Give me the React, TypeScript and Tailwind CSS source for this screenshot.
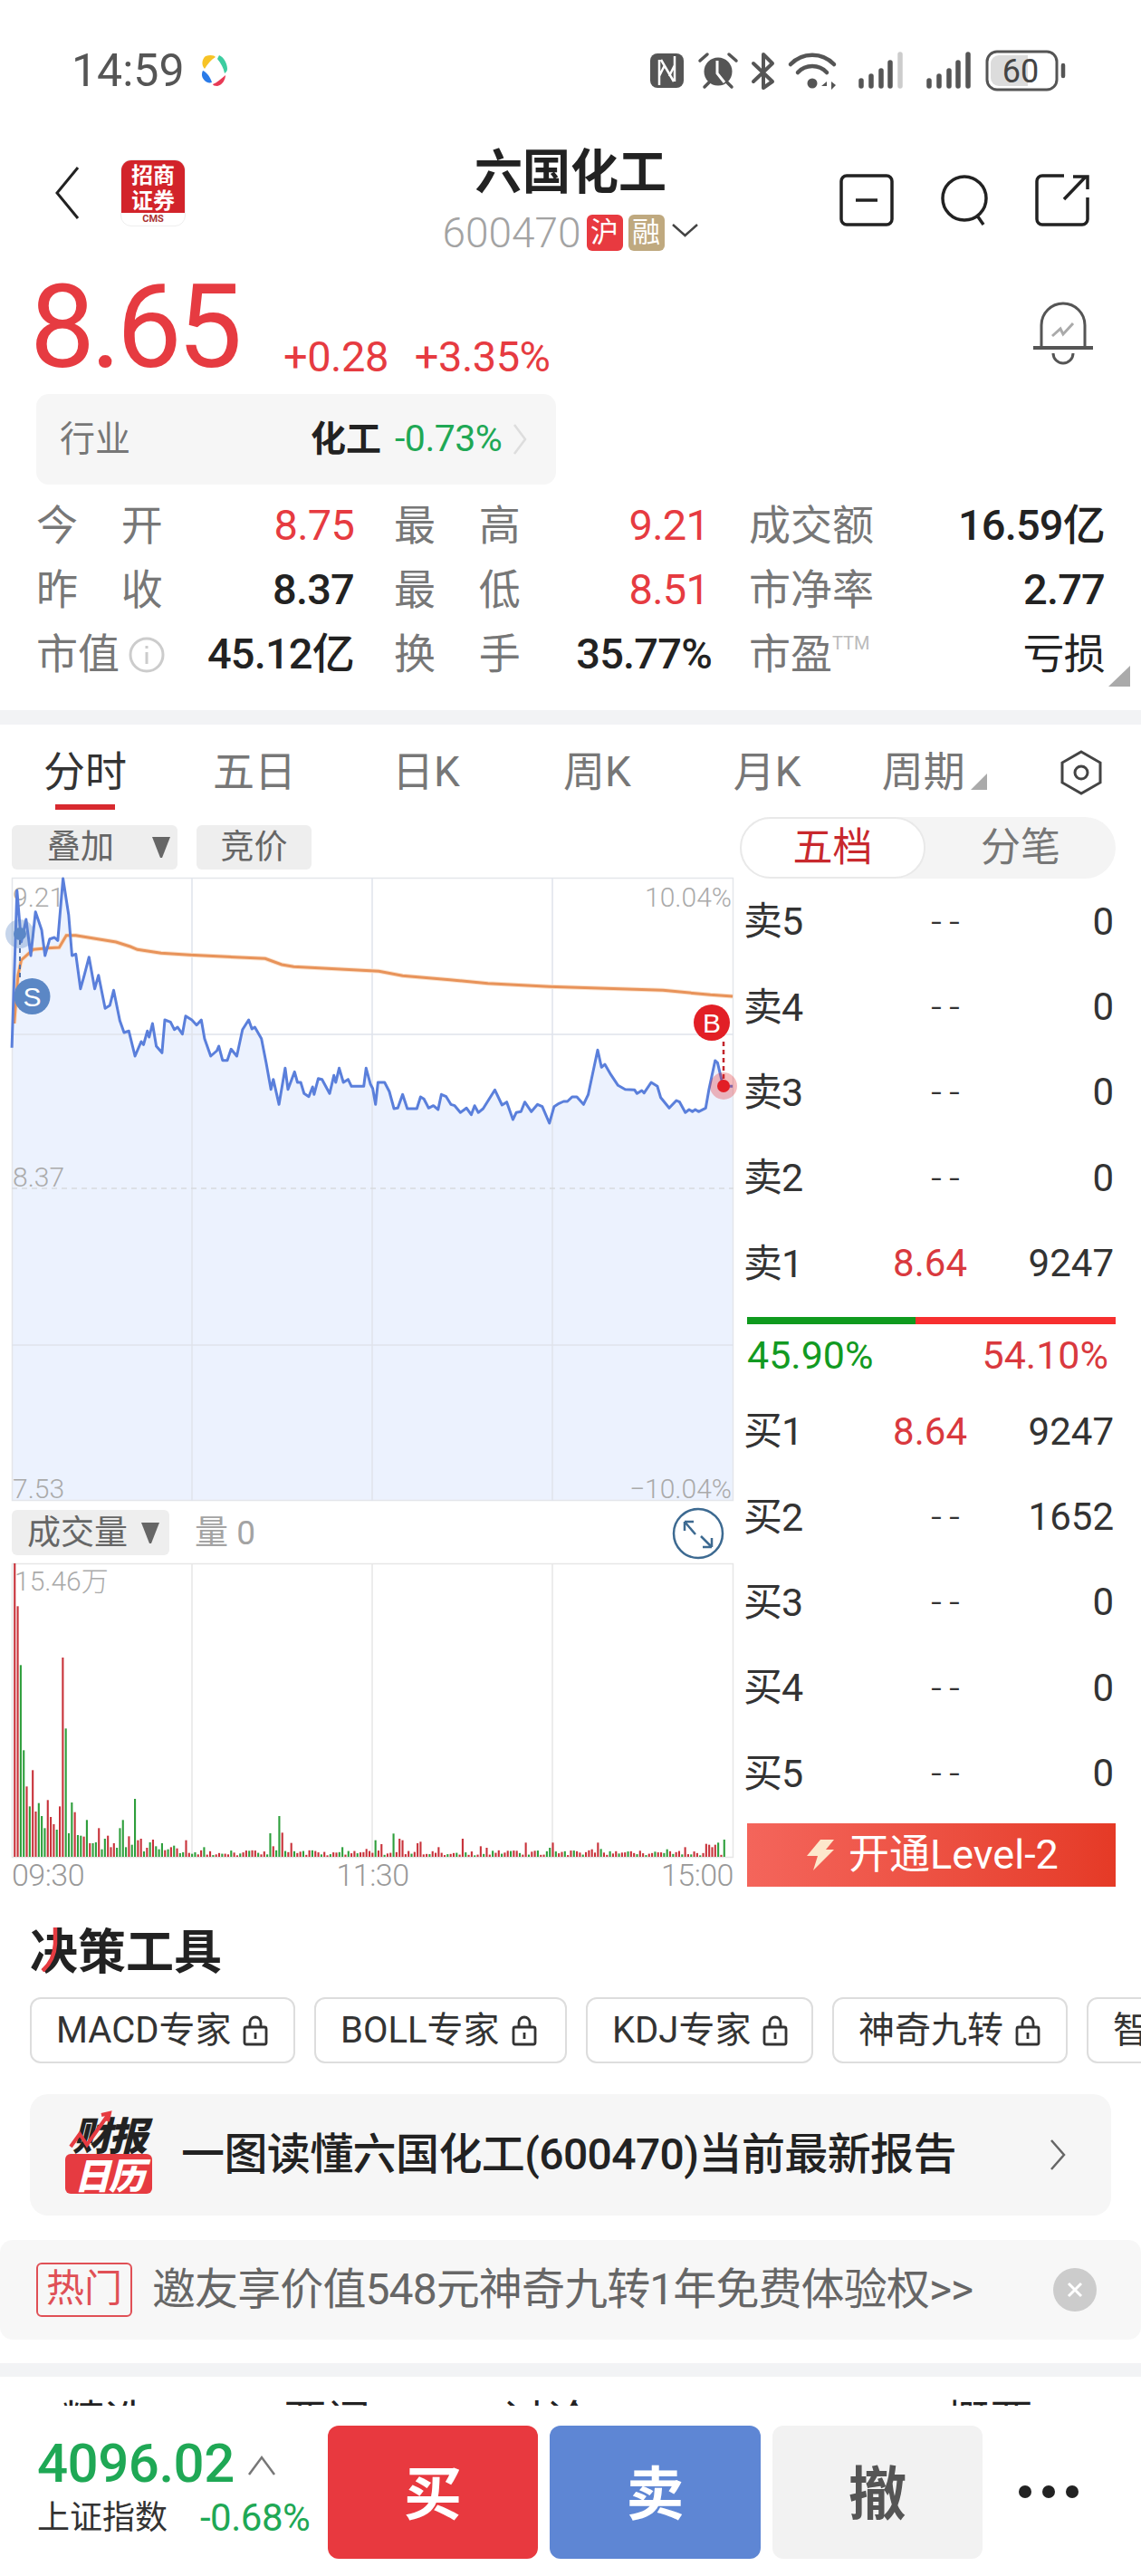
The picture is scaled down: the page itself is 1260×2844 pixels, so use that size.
import React from "react";

const priceRaw = [25,830,36,310,45,480,55,405,65,525,75,380,88,440,95,525,105,470,115,465,122,475,133,270,145,390,152,525,160,520,170,635,178,590,188,530,200,635,208,590,222,700,232,690,240,640,253,740,262,780,272,775,285,858,298,810,303,820,311,775,315,795,322,750,330,825,342,847,348,738,360,745,368,770,375,762,385,785,392,725,405,738,415,755,425,738,432,800,445,858,458,840,462,825,470,872,480,872,488,835,500,858,512,770,525,738,532,768,538,762,552,800,562,880,572,968,577,935,589,1018,602,898,608,968,622,910,628,945,635,945,642,982,652,992,660,960,663,985,672,932,680,935,696,982,705,922,709,945,716,898,725,945,735,935,742,958,768,958,773,898,782,950,787,965,793,1018,798,945,812,945,822,975,832,1032,840,1030,850,985,860,1032,880,1032,888,993,895,1000,905,1030,915,1022,925,1035,932,985,942,992,952,1018,960,1022,972,1045,985,1030,995,1052,1002,1022,1010,1045,1020,1032,1045,970,1060,1020,1070,1010,1083,1068,1090,1045,1100,1042,1108,1010,1122,1042,1135,1018,1145,1025,1160,1080,1170,1025,1180,1015,1190,1008,1198,1008,1208,993,1218,993,1232,1018,1242,985,1262,838,1270,895,1277,885,1290,920,1305,955,1320,968,1340,970,1345,982,1355,972,1360,980,1375,945,1388,958,1395,995,1413,1030,1428,1005,1435,1010,1447,1045,1455,1035,1462,1042,1468,1035,1475,1042,1490,1030,1497,968,1510,873,1515,880,1527,958,1547,958];
const avgRaw = [30,750,38,590,45,540,70,505,100,500,125,498,140,458,160,458,245,480,275,495,290,505,340,517,400,523,560,535,595,555,620,562,800,577,850,592,950,605,1030,617,1160,628,1400,640,1500,655,1547,660];

function toPts(raw: number[]) {
  const out: string[] = [];
  for (let i = 0; i < raw.length; i += 2) {
    out.push(`${(raw[i] / 1.912).toFixed(1)},${(880 + raw[i + 1] / 3).toFixed(1)}`);
  }
  return out;
}
const pricePts = toPts(priceRaw);
const avgPts = toPts(avgRaw);

const head: [number, number][] = [[972,1],[830,1],[635,0],[353,0],[233,1],[167,0],[287,1],[150,1],[178,0],[135,0],[95,0],[188,1],[132,1],[108,1],[90,0],[167,1],[660,1],[425,0],[78,0],[180,0],[148,1],[72,0],[70,0],[67,1],[122,0],[45,1],[45,0],[48,0],[95,1],[25,0],[60,0],[70,1],[32,1],[45,1],[30,0],[95,0],[122,0],[32,0],[68,1],[40,0],[192,0],[55,1],[60,1],[18,0],[30,1],[48,0],[57,1],[35,0],[25,0],[45,0],[22,1],[25,0],[32,1],[37,0],[28,1],[12,0],[15,0],[55,1],[13,1],[10,0],[15,0]];
const overrides: [number, number, number][] = [[430,32,0],[570,78,0],[576,35,1],[589,135,0],[595,80,1],[614,46,1],[722,32,0],[772,26,1],[792,55,0],[804,42,1],[829,77,0],[842,60,1],[848,55,1],[880,45,1],[886,50,1],[925,32,1],[975,60,1],[1013,35,1],[1026,30,1],[1108,47,1],[1160,30,0],[1165,47,1],[1248,25,1],[1260,47,1],[1268,26,0],[1410,25,0],[1450,32,1],[1490,43,1],[1496,40,1],[1502,32,1],[1508,40,1],[1515,47,0],[1528,57,0]];
const bars: { x: number; h: number; up: boolean }[] = [];
for (let i = 0; i < 237; i++) {
  const seed = (i * 37 + (i * i * 13) % 29) % 23;
  let h = 5 + seed * 0.75;
  let up = (i * 7 + (i % 5) * 3) % 3 !== 0;
  if (i < head.length) {
    h = head[i][0];
    up = head[i][1] === 1;
  }
  bars.push({ x: 16.2 + i * 3.32, h: h / 3, up });
}
overrides.forEach(([zx, zh, u]) => {
  const idx = Math.round((zx - 31) / 6.35);
  if (bars[idx]) {
    bars[idx].h = zh / 3;
    bars[idx].up = u === 1;
  }
});

function Tri({ className }: { className: string }) {
  return (
    <svg viewBox="0 0 22 25" className={className}>
      <path d="M1 1h20L12 24h-2z" fill="#666" />
    </svg>
  );
}

function Lock() {
  return (
    <svg viewBox="0 0 30 34" className="w-[30px] h-[34px]" fill="none" stroke="#333" strokeWidth="2.8">
      <path d="M9 13V8a6 6 0 0 1 12 0v5" />
      <rect x="3" y="13" width="24" height="19" rx="2" />
      <path d="M15 19v7" />
    </svg>
  );
}

function StatusBar() {
  return (
    <div className="h-[156px] flex items-start pt-[53px]">
      <div className="ml-[79px] w-[125px] text-[50px] leading-[50px] text-[#555] font-normal tracking-[0px]">14:59</div>
      <svg viewBox="0 0 36 36" className="ml-[15px] mt-[7px] w-[36px] h-[36px]" fill="none">
        <path d="M8 2c5-2 10-1 11 1-5 3-9 8-12 13C3 12 4 5 8 2z" fill="#f7c325" />
        <path d="M23 1c5 2 9 9 9 15 0 3-2 4-3 5-1-6-4-11-8-16z" fill="#3ccda0" />
        <path d="M30 23c0 4-3 11-9 12-3 0-5-1-5-2 5-2 9-6 14-10z" fill="#e83a55" />
        <path d="M5 18c3 1 8 6 10 13-3 1-6 0-8-2-3-3-4-7-2-11z" fill="#2a7be8" />
      </svg>
      <svg viewBox="700 50 480 55" className="ml-[445px] -mt-[3px] w-[480px] h-[55px]" fill="none" stroke="#555">
        <rect x="718" y="59" width="37" height="38" rx="8" fill="#555" stroke="none" />
        <path d="M728 94V66M745 62v28M730 66l14 24M734 72l-6 12M739 84l6-12" stroke="#fff" strokeWidth="2.500" />
        <circle cx="793" cy="79" r="15.500" fill="#555" stroke="none" />
        <path d="M792 67v14l8 10" stroke="#fff" strokeWidth="3" />
        <path d="M773 67l8-7M813 67l-8-7M778 96l5-5M808 96l-5-5" strokeWidth="3.500" strokeLinecap="round" />
        <path d="M832 70l21 20-10 7V60l10 10-21 20" strokeWidth="4" strokeLinejoin="round" strokeLinecap="round" />
        <path d="M873 71a33 33 0 0 1 48 0M881 80a22 22 0 0 1 32 0" strokeWidth="4.500" strokeLinecap="round" />
        <circle cx="897" cy="92" r="5.500" fill="#555" stroke="none" />
        <path d="M913 90l-6 5h6zM918 90v9l5-5z" fill="#555" stroke="none" />
        <g strokeWidth="5.500" strokeLinecap="round">
          <path d="M951 95v-6M962 95v-11M973 95v-17M983 95v-26" />
          <path d="M994 95V60" stroke="#ccc" />
          <path d="M1026 95v-6M1037 95v-11M1048 95v-17M1058 95v-26M1069 95V60" />
        </g>
        <rect x="1090" y="57" width="77" height="42" rx="11" strokeWidth="3" />
        <path d="M1094 70a9 9 0 0 1 9-9h32v34h-32a9 9 0 0 1-9-9z" fill="#dcdcdc" stroke="none" />
        <path d="M1174 72v12" strokeWidth="4.500" strokeLinecap="round" />
        <text x="1127" y="91" textAnchor="middle" fill="#444" stroke="none" fontSize="36" fontFamily="Roboto, sans-serif">60</text>
      </svg>
    </div>
  );
}

function Nav() {
  return (
    <div className="h-[150px] grid grid-cols-[1fr_auto_1fr]">
      <div className="flex items-start pl-[60px]">
        <svg viewBox="0 0 28 60" className="mt-[27px] w-[28px] h-[60px]" fill="none" stroke="#222" strokeWidth="3">
          <path d="M26 2L3 30l23 28" />
        </svg>
        <div className="ml-[45px] mt-[20px] w-[72px] h-[74px] rounded-[12px] overflow-hidden bg-white border border-[#eee] flex flex-col">
          <div className="h-[58px] bg-[#d2232a] text-white font-bold text-[24px] leading-[28px] text-center tracking-[0px] pt-[1px] [font-family:'Noto_Sans_CJK_SC',sans-serif]">
            招商
            <br />
            证券
          </div>
          <div className="flex-1 text-center text-[11px] leading-[14px] text-[#a33] font-bold">CMS</div>
        </div>
      </div>
      <div className="flex flex-col items-center">
        <div className="h-[70px] text-[53px] leading-[70px] font-bold text-[#222]">六国化工</div>
        <div className="mt-[11px] h-[40px] flex items-center">
          <span className="text-[46px] leading-[40px] text-[#a3a3a3] font-light">600470</span>
          <span className="ml-[6px] w-[40px] h-[40px] rounded-[6px] bg-[#e83a40] text-white text-[31px] leading-[40px] text-center">沪</span>
          <span className="ml-[6px] w-[40px] h-[40px] rounded-[6px] bg-[#bfa97f] text-white text-[31px] leading-[40px] text-center">融</span>
          <svg viewBox="0 0 31 16" className="ml-[7px] mb-[6px] w-[31px] h-[16px]" fill="none" stroke="#444" strokeWidth="2.5">
            <path d="M2 2l13.500 12L29 2" />
          </svg>
        </div>
      </div>
      <div className="flex items-start justify-end pr-[57px] gap-[49px]">
        <svg viewBox="0 0 60 58" className="mt-[36px] w-[60px] h-[58px]" fill="none" stroke="#222" strokeWidth="3.500">
          <rect x="2" y="2" width="56" height="54" rx="6" />
          <path d="M18 29h24" />
        </svg>
        <svg viewBox="0 0 58 58" className="mt-[36px] w-[58px] h-[58px]" fill="none" stroke="#222" strokeWidth="3.500">
          <circle cx="29" cy="27" r="24" />
          <path d="M43 46l7 10" />
        </svg>
        <svg viewBox="0 0 60 58" className="mt-[36px] w-[60px] h-[58px]" fill="none" stroke="#222" strokeWidth="3.500">
          <path d="M32 2H8a6 6 0 0 0-6 6v42a6 6 0 0 0 6 6h44a6 6 0 0 0 6-6V26" />
          <path d="M32 28L56 3M42 3h16v14" />
        </svg>
      </div>
    </div>
  );
}

function PriceRow() {
  return (
    <div className="h-[129px] flex items-start">
      <div className="ml-[33px] w-[243px] h-[110px] text-[128px] leading-[110px] text-[#e63b41] tracking-[-5px] font-normal">8.65</div>
      <div className="ml-[37px] mt-[62px] h-[52px] text-[47px] leading-[52px] text-[#e63b41] tracking-[-0.5px]">+0.28</div>
      <div className="ml-[29px] mt-[62px] h-[52px] text-[47px] leading-[52px] text-[#e63b41] tracking-[-0.5px]">+3.35%</div>
      <svg viewBox="0 0 68 70" className="ml-auto mr-[52px] mt-[27px] w-[68px] h-[70px]" fill="none" stroke="#555" strokeWidth="3">
        <path d="M10 50V26a24 24 0 0 1 48 0v24" />
        <path d="M1 51h66" strokeWidth="4" />
        <path d="M23 57a11 11 0 0 0 22 0" />
        <path d="M22 38l9-8 3 6 11-12" stroke="#aaa" strokeWidth="3" />
      </svg>
    </div>
  );
}

function Industry() {
  return (
    <div className="ml-[40px] w-[574px] h-[100px] rounded-[14px] bg-[#f6f6f6] flex items-center">
      <div className="ml-[26px] text-[39px] text-[#777]">行业</div>
      <div className="ml-[199px] text-[39px] font-bold text-[#222]">化工</div>
      <div className="ml-[15px] text-[41px] text-[#1fa855] tracking-[-0.5px]">-0.73%</div>
      <svg viewBox="0 0 16 36" className="ml-[12px] w-[16px] h-[36px]" fill="none" stroke="#ddd" strokeWidth="2.500">
        <path d="M2 2l12 16L2 34" />
      </svg>
    </div>
  );
}

function Two({ a, b }: { a: string; b: string }) {
  return (
    <div className="w-[139px] flex justify-between text-[#777] text-[46px]">
      <span>{a}</span>
      <span>{b}</span>
    </div>
  );
}

function Stats() {
  const cell = "flex justify-between items-center h-[71px]";
  const red = "text-[#e63b41]";
  const dark = "text-[#222] font-medium";
  return (
    <div className="relative mt-[10px] pl-[40px] h-[239px]">
      <div className="grid grid-cols-[351px_348px_393px] gap-x-[44px] text-[47px] tracking-[-0.8px]">
        <div className={cell}><Two a="今" b="开" /><span className={red}>8.75</span></div>
        <div className={cell}><Two a="最" b="高" /><span className={red}>9.21</span></div>
        <div className={cell}><span className="text-[#777] text-[46px] tracking-[0px]">成交额</span><span className={dark}>16.59亿</span></div>
        <div className={cell}><Two a="昨" b="收" /><span className={dark}>8.37</span></div>
        <div className={cell}><Two a="最" b="低" /><span className={red}>8.51</span></div>
        <div className={cell}><span className="text-[#777] text-[46px] tracking-[0px]">市净率</span><span className={dark}>2.77</span></div>
        <div className={cell}>
          <span className="flex items-center text-[#777] text-[46px] tracking-[0px]">
            市值
            <svg viewBox="0 0 40 40" className="ml-[10px] w-[40px] h-[40px]" fill="none" stroke="#ccc" strokeWidth="3">
              <circle cx="20" cy="20" r="18" />
              <path d="M20 17v13M20 10v3" />
            </svg>
          </span>
          <span className={dark}>45.12亿</span>
        </div>
        <div className={cell}><Two a="换" b="手" /><span className={dark + " -mr-[3px]"}>35.77%</span></div>
        <div className={cell}>
          <span className="flex items-start text-[#777] text-[46px] tracking-[0px]">
            市盈
            <span className="mt-[10px] text-[20px] leading-[24px] text-[#bbb]">TTM</span>
          </span>
          <span className="text-[#222] text-[46px]">亏损</span>
        </div>
      </div>
      <svg viewBox="0 0 24 23" className="absolute left-[1224px] top-[190px] w-[24px] h-[23px]">
        <path d="M24 0v23H0z" fill="#aaa" />
      </svg>
    </div>
  );
}

function Divider({ h }: { h: string }) {
  return <div className={h + " bg-[#f2f3f5]"} />;
}

function Tabs() {
  return (
    <div className="relative h-[102px] pt-[22px] flex items-start text-[46px] leading-[60px] text-[#777]">
      <span className="ml-[48px] text-[#333]">分时</span>
      <span className="ml-[95px]">五日</span>
      <span className="ml-[106px]">日K</span>
      <span className="ml-[114px]">周K</span>
      <span className="ml-[113px]">月K</span>
      <span className="ml-[89px]">周期</span>
      <svg viewBox="0 0 18 18" className="ml-[6px] mt-[32px] w-[18px] h-[18px]">
        <path d="M18 0v18H0z" fill="#aaa" />
      </svg>
      <svg viewBox="0 0 48 50" className="ml-[80px] mt-[6px] w-[48px] h-[50px]" fill="none" stroke="#444" strokeWidth="3">
        <path d="M24 2l21 12v22L24 48 3 36V14z" />
        <circle cx="24" cy="25" r="7" />
      </svg>
      <div className="absolute left-[61px] top-[88px] w-[66px] h-[6px] bg-[#d8292f]" />
    </div>
  );
}

function PriceChart() {
  return (
    <svg viewBox="13 969 797 688" className="w-[797px] h-[688px] overflow-visible" fill="none">
      <polygon points={`13,1657 ${pricePts.join(" ")} 810,1657`} fill="#ecf2fe" />
      <rect x="13.500" y="969.500" width="796" height="687" stroke="#e4e6ea" strokeWidth="1.500" />
      <path d="M212 969v688M411 969v688M610 969v688" stroke="#e0e4ec" strokeWidth="1.500" />
      <path d="M13 1142h797M13 1485h797" stroke="#e0e4ec" strokeWidth="1.500" />
      <path d="M13 1312h797" stroke="#d8dade" strokeWidth="1.500" strokeDasharray="6 5" />
      <g fill="#aaa" fontSize="30" fontFamily="Roboto, sans-serif" fontWeight="300">
        <text x="14" y="1001">9.21</text>
        <text x="808" y="1001" textAnchor="end">10.04%</text>
        <text x="14" y="1310">8.37</text>
        <text x="14" y="1654">7.53</text>
        <text x="808" y="1654" textAnchor="end">−10.04%</text>
      </g>
      <polyline points={avgPts.join(" ")} stroke="#fbe3cf" strokeWidth="5" />
      <polyline points={avgPts.join(" ")} stroke="#e8935a" strokeWidth="3" />
      <polyline points={pricePts.join(" ")} stroke="#5a7fdb" strokeWidth="3" strokeLinejoin="round" />
      <circle cx="22" cy="1031" r="16" fill="#5b87c7" opacity="0.35" />
      <circle cx="22" cy="1031" r="7" fill="#5b87c7" />
      <path d="M22 1038v44" stroke="#4f6fa8" strokeWidth="2" strokeDasharray="5 4" />
      <circle cx="35.500" cy="1100" r="20" fill="#5b87c5" />
      <text x="35.500" y="1111" textAnchor="middle" fill="#fff" fontSize="30" fontFamily="Liberation Sans, sans-serif">S</text>
      <path d="M799 1150v44" stroke="#c2262c" strokeWidth="2.500" strokeDasharray="5 4" />
      <circle cx="799" cy="1199" r="15" fill="#e21f26" opacity="0.3" />
      <circle cx="799" cy="1199" r="7" fill="#e21f26" />
      <circle cx="786" cy="1129" r="20" fill="#e21f26" />
      <text x="786" y="1140" textAnchor="middle" fill="#fff" fontSize="30" fontFamily="Liberation Sans, sans-serif">B</text>
    </svg>
  );
}

function VolChart() {
  return (
    <svg viewBox="13 1726 797 324" className="w-[797px] h-[324px] overflow-visible" fill="none">
      <rect x="13.500" y="1726.500" width="796" height="324" stroke="#e6e6e6" strokeWidth="1.500" />
      <path d="M212 1726v324M411 1726v324M610 1726v324" stroke="#e6e6e6" strokeWidth="1.500" />
      <text x="16" y="1756" fill="#aaa" fontSize="30" fontWeight="300" fontFamily="Roboto, 'Noto Sans CJK SC', sans-serif">15.46万</text>
      {bars.map((b, i) => (
        <rect key={i} x={b.x - 1} y={2050 - b.h} width="2.100" height={b.h} fill={b.up ? "#c8323a" : "#2e9f3c"} />
      ))}
    </svg>
  );
}

function LeftColumn() {
  return (
    <div className="ml-[13px] w-[797px] pt-[9px]">
      <div className="h-[49px] flex gap-[21px]">
        <div className="w-[183px] h-[49px] rounded-[6px] bg-[#eeeeee] flex items-center pl-[39px] text-[37px] leading-[49px] text-[#666]">
          <span>叠加</span>
          <Tri className="ml-[41px] w-[22px] h-[25px]" />
        </div>
        <div className="w-[127px] h-[49px] rounded-[6px] bg-[#eeeeee] flex items-center justify-center text-[37px] leading-[49px] text-[#666]">竞价</div>
      </div>
      <div className="mt-[9px] h-[688px]">
        <PriceChart />
      </div>
      <div className="mt-[10px] h-[50px] flex items-center">
        <div className="w-[174px] h-[50px] rounded-[6px] bg-[#eeeeee] flex items-center pl-[17px] text-[37px] leading-[50px] text-[#666]">
          <span className="pt-[2px]">成交量</span>
          <Tri className="ml-[14px] w-[22px] h-[25px]" />
        </div>
        <span className="ml-[28px] pt-[2px] text-[37px] leading-[50px] text-[#a3a3a3]">量 0</span>
        <svg viewBox="0 0 58 58" className="ml-auto mr-[10px] mt-[2px] w-[58px] h-[58px]" fill="none" stroke="#3d6a91" strokeWidth="2.500">
          <circle cx="29" cy="29" r="27" />
          <path d="M14 16l12 14M32 32l12 12M14 16v10M14 16h10M44 44V34M44 44H34" strokeWidth="2.500" />
        </svg>
      </div>
      <div className="mt-[9px] h-[324px]">
        <VolChart />
      </div>
      <div className="mt-[6px] h-[28px] flex justify-between text-[34px] leading-[28px] font-light text-[#999] tracking-[-0.5px]">
        <span>09:30</span>
        <span>11:30</span>
        <span>15:00</span>
      </div>
    </div>
  );
}

function BookRow({ label, price, qty }: { label: string; price: string; qty: string }) {
  const isDash = price === "--";
  return (
    <div className="h-[94.4px] flex items-center pl-[4px] pr-[2px] text-[42px] text-[#333]">
      <span className="w-[96px] text-[43px] leading-[50px] tracking-[-1px]">{label}</span>
      <span className={"w-[151px] text-right " + (isDash ? "text-[#333] tracking-[8px] font-light" : "text-[#d9393e]")}>{price}</span>
      <span className="flex-1 text-right">{qty}</span>
    </div>
  );
}

function RightColumn() {
  return (
    <div className="ml-[7px] w-[415px]">
      <div className="h-[68px] rounded-full bg-[#f4f4f4] flex text-[44px] leading-[64px]">
        <div className="w-[205px] h-[68px] rounded-full bg-white border-2 border-[#e9e9e9] text-center text-[#c8282d]">五档</div>
        <div className="flex-1 text-center text-[#777] leading-[68px]">分笔</div>
      </div>
      <BookRow label="卖5" price="--" qty="0" />
      <BookRow label="卖4" price="--" qty="0" />
      <BookRow label="卖3" price="--" qty="0" />
      <BookRow label="卖2" price="--" qty="0" />
      <BookRow label="卖1" price="8.64" qty="9247" />
      <div className="mt-[12px] ml-[8px] flex h-[8px]">
        <div className="w-[186px] bg-[#0f9a1e]" />
        <div className="flex-1 bg-[#f72f2f]" />
      </div>
      <div className="mt-[8px] ml-[8px] mr-[8px] h-[52px] flex justify-between items-center text-[43px]">
        <span className="text-[#129a22]">45.90%</span>
        <span className="text-[#d9393e]">54.10%</span>
      </div>
      <div className="mt-[11px]">
        <BookRow label="买1" price="8.64" qty="9247" />
        <BookRow label="买2" price="--" qty="1652" />
        <BookRow label="买3" price="--" qty="0" />
        <BookRow label="买4" price="--" qty="0" />
        <BookRow label="买5" price="--" qty="0" />
      </div>
      <div className="mt-[8px] ml-[8px] h-[70px] bg-gradient-to-r from-[#f4655b] to-[#e53a26] flex items-center text-white text-[45px]">
        <svg viewBox="0 0 30 36" className="ml-[66px] w-[30px] h-[36px]">
          <path d="M15 1h15l-9 11h9L7 35l5-16H0z" fill="#fde8cc" />
        </svg>
        <span className="ml-[16px]">开通Level-2</span>
      </div>
    </div>
  );
}

function Chip({ w, text }: { w: string; text: string }) {
  return (
    <div className={w + " shrink-0 h-[73px] rounded-[12px] border-2 border-[#dddddd] flex items-center pl-[27px] text-[40px] text-[#333]"}>
      <span>{text}</span>
      <span className="ml-[12px]"><Lock /></span>
    </div>
  );
}

function Tools() {
  return (
    <div className="mt-[36px]">
      <div className="relative ml-[33px] h-[63px] text-[53px] leading-[63px] font-bold text-[#222] [font-family:'Noto_Sans_CJK_SC',sans-serif]">
        决策工具
        <svg viewBox="0 0 26 50" className="absolute left-[10px] top-[7px] w-[26px] h-[50px]" fill="none" stroke="#e63b41" strokeWidth="4.500">
          <path d="M18 1v18q-1 18-14 30" />
        </svg>
      </div>
      <div className="mt-[22px] pl-[33px] flex gap-[21px] overflow-hidden">
        <Chip w="w-[293px]" text="MACD专家" />
        <Chip w="w-[279px]" text="BOLL专家" />
        <Chip w="w-[251px]" text="KDJ专家" />
        <Chip w="w-[260px]" text="神奇九转" />
        <Chip w="w-[280px]" text="智能诊股" />
      </div>
    </div>
  );
}

function ReportCard() {
  return (
    <div className="mt-[34px] ml-[33px] w-[1194px] h-[134px] rounded-[20px] bg-[#f6f6f6] flex items-center">
      <div className="relative ml-[39px] w-[96px] h-[90px] [font-family:'Noto_Sans_CJK_SC',sans-serif] font-black italic text-center">
        <div className="h-[42px] text-[#222] text-[43px] leading-[42px] tracking-[-3px]">财报</div>
        <div className="mt-[2px] h-[44px] rounded-[6px] bg-[#e63b41] text-white text-[40px] leading-[44px] tracking-[-2px]">日历</div>
        <svg viewBox="0 0 50 44" className="absolute left-[4px] top-[-4px] w-[50px] h-[44px]" fill="none" stroke="#e63b41" strokeWidth="4">
          <path d="M2 40l10-14 8 12 24-34M36 5l9-2-2 9" />
        </svg>
      </div>
      <div className="ml-[32px] text-[48px] font-medium text-[#222] tracking-[-0.6px] whitespace-nowrap">一图读懂六国化工(600470)当前最新报告</div>
      <svg viewBox="0 0 20 36" className="ml-auto mr-[49px] w-[20px] h-[36px]" fill="none" stroke="#666" strokeWidth="2.500">
        <path d="M3 2l14 16L3 34" />
      </svg>
    </div>
  );
}

function HotBar() {
  return (
    <div className="mt-[27px] h-[110px] rounded-[14px] bg-[#f7f7f7] flex items-center">
      <div className="ml-[40px] w-[106px] h-[60px] rounded-[6px] border-2 border-[#e05056] text-[#e05056] text-[42px] leading-[54px] text-center">热门</div>
      <div className="ml-[22px] text-[48px] text-[#666] tracking-[-0.9px] whitespace-nowrap">邀友享价值548元神奇九转1年免费体验权&gt;&gt;</div>
      <div className="ml-auto mr-[49px] w-[48px] h-[48px] rounded-full bg-[#cccccc] flex items-center justify-center">
        <svg viewBox="0 0 20 20" className="w-[20px] h-[20px]" fill="none" stroke="#fff" strokeWidth="3">
          <path d="M3 3l14 14M17 3L3 17" />
        </svg>
      </div>
    </div>
  );
}

function HiddenTabs() {
  return (
    <div className="h-[32px] overflow-hidden pt-[20px] flex text-[48px] leading-[60px] text-[#222]">
      <span className="ml-[68px] w-[245px]">精选</span>
      <span className="w-[242px]">要闻</span>
      <span className="w-[245px]">讨论</span>
      <span className="w-[245px] text-[#aaa]">F10</span>
      <span>概要</span>
    </div>
  );
}

function BottomBar() {
  return (
    <div className="h-[189px] bg-white flex items-start">
      <div className="ml-[41px] w-[321px] pt-[38px]">
        <div className="flex items-center h-[52px]">
          <span className="text-[60px] leading-[52px] font-medium text-[#1fa855] tracking-[-0.5px]">4096.02</span>
          <svg viewBox="0 0 32 24" className="ml-[14px] mt-[4px] w-[32px] h-[24px]" fill="none" stroke="#777" strokeWidth="2.500">
            <path d="M2 22L16 3l14 19" />
          </svg>
        </div>
        <div className="mt-[14px] flex items-center h-[40px]">
          <span className="text-[36px] leading-[40px] text-[#333]">上证指数</span>
          <span className="ml-[36px] text-[42px] leading-[40px] text-[#1fa855] tracking-[-0.5px]">-0.68%</span>
        </div>
      </div>
      <div className="mt-[22px] flex gap-[13px] [font-family:'Noto_Sans_CJK_SC',sans-serif] font-bold text-[64px] text-center leading-[141px]">
        <div className="w-[232px] h-[147px] rounded-[12px] bg-[#e8393f] text-white">买</div>
        <div className="w-[233px] h-[147px] rounded-[12px] bg-[#5e86d4] text-white">卖</div>
        <div className="w-[232px] h-[147px] rounded-[12px] bg-[#f2f2f2] text-[#555]">撤</div>
      </div>
      <svg viewBox="0 0 68 16" className="ml-[39px] mt-[87px] w-[68px] h-[16px]" fill="#222">
        <circle cx="8" cy="8" r="7" />
        <circle cx="34" cy="8" r="7" />
        <circle cx="60" cy="8" r="7" />
      </svg>
    </div>
  );
}

export default function App() {
  return (
    <div className="w-[1260px] h-[2844px] overflow-hidden bg-white [font-family:Roboto,'Noto_Sans_CJK_SC',sans-serif]">
      <StatusBar />
      <Nav />
      <PriceRow />
      <Industry />
      <Stats />
      <Divider h="h-[16px]" />
      <Tabs />
      <div className="flex">
        <LeftColumn />
        <RightColumn />
      </div>
      <Tools />
      <ReportCard />
      <HotBar />
      <div className="mt-[26px]">
        <Divider h="h-[15px]" />
      </div>
      <HiddenTabs />
      <BottomBar />
    </div>
  );
}
